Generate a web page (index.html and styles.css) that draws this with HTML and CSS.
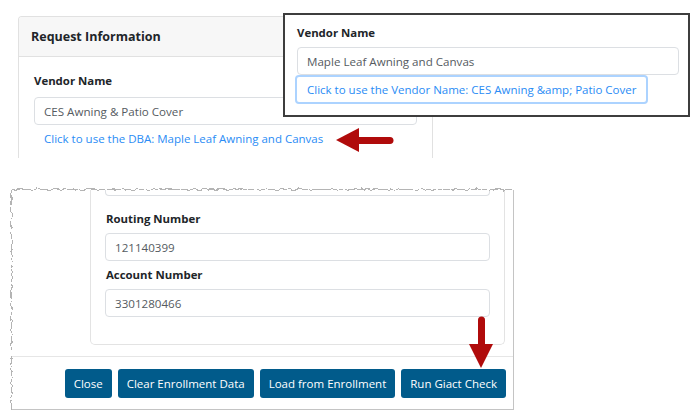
FILE: index.html
```html
<!DOCTYPE html>
<html lang="en">
<head>
    <meta charset="UTF-8">
    <meta name="viewport" content="width=device-width, initial-scale=1.0">
    <title>Vendor Name Request</title>
    <link rel="stylesheet" href="styles.css">
</head>
<body>

    <div class="shot">

        <!-- Request card (cropped at the bottom) -->
        <section class="card">
            <div class="card-header">Request Information</div>
            <div class="card-body">
                <label class="field-label" for="vendorName">Vendor Name</label>
                <input class="field" type="text" id="vendorName" value="CES Awning &amp; Patio Cover" readonly>
                <a class="use-link" href="#">Click to use the DBA: Maple Leaf Awning and Canvas</a>
            </div>
        </section>

        <!-- Callout: the DBA version of the same field -->
        <div class="callout">
            <label class="field-label" for="dbaName">Vendor Name</label>
            <input class="field" type="text" id="dbaName" value="Maple Leaf Awning and Canvas" readonly>
            <a class="use-btn" href="#">Click to use the Vendor Name: CES Awning &amp;amp; Patio Cover</a>
        </div>

        <svg class="arrow arrow-left" width="60" height="26" viewBox="0 0 60 26">
            <polygon points="1,13 24,1 24,25" />
            <path d="M22 10 H55 a3 3 0 0 1 0 7 H22 Z" />
        </svg>

        <!-- Modal clip with torn edges -->
        <div class="modal-clip">
            <svg class="torn" width="508" height="228" viewBox="0 0 508 228">
                <defs>
                    <filter id="rough" filterUnits="userSpaceOnUse" x="-10" y="-10" width="530" height="250">
                        <feTurbulence type="fractalNoise" baseFrequency="0.18" numOctaves="2" seed="7" />
                        <feDisplacementMap in="SourceGraphic" scale="5" xChannelSelector="R" yChannelSelector="G" />
                    </filter>
                </defs>
                <path d="M504 4.5 L3.5 4.5 L3.5 224" fill="none" stroke="#b4b4b4" stroke-width="1" filter="url(#rough)" />
            </svg>

            <div class="bank-card">
                <div class="field-stub"></div>
                <label class="field-label first" for="routing">Routing Number</label>
                <input class="field" type="text" id="routing" value="121140399" readonly>
                <label class="field-label" for="account">Account Number</label>
                <input class="field" type="text" id="account" value="3301280466" readonly>
            </div>

            <div class="modal-footer">
                <button class="btn">Close</button>
                <button class="btn">Clear Enrollment Data</button>
                <button class="btn">Load from Enrollment</button>
                <button class="btn">Run Giact Check</button>
            </div>
        </div>

        <svg class="arrow arrow-down" width="28" height="56" viewBox="0 0 28 56">
            <path d="M10 5 a3.5 3.5 0 0 1 7 0 V32 H10 Z" />
            <polygon points="1,29 25,29 13,53" />
        </svg>

    </div>

</body>
</html>
```

FILE: styles.css
```css
* {
    box-sizing: border-box;
}
body {
    margin: 0;
    background: #ffffff;
    font-family: "Open Sans", "Noto Sans", sans-serif;
    font-size: 11.5px;
    color: #212529;
}
.shot {
    position: relative;
    width: 692px;
    height: 416px;
    overflow: hidden;
}

/* shared form bits */
.field-label {
    display: block;
    font-weight: bold;
    font-size: 11.4px;
    line-height: 20px;
    color: #212529;
}
.field {
    display: block;
    width: 100%;
    height: 28px;
    padding: 0 9px;
    border: 1px solid #dcdfe3;
    border-radius: 4px;
    font-family: inherit;
    font-size: 11.6px;
    color: #555b61;
    background: #ffffff;
    outline: none;
}

/* request card */
.card {
    margin: 16px 0 0 18px;
    width: 415px;
    height: 142px;
    border: 1px solid #e1e1e1;
    border-bottom: none;
    border-radius: 4px 4px 0 0;
    overflow: hidden;
}
.card-header {
    height: 40px;
    padding: 0 12px;
    display: flex;
    align-items: center;
    background: #f7f7f7;
    border-bottom: 1px solid #e1e1e1;
    font-weight: bold;
    font-size: 12.5px;
}
.card-body {
    padding: 0 15px;
}
.card-body .field-label {
    margin: 14px 0 6px;
}
.use-link {
    display: block;
    margin-top: 4px;
    padding-left: 10px;
    line-height: 20px;
    color: #2a8cf5;
    text-decoration: none;
}

/* callout box */
.callout {
    position: absolute;
    left: 283px;
    top: 13px;
    width: 407px;
    height: 104px;
    padding: 8px 9px 0 12px;
    border: 2px solid #3d3d3d;
    background: #ffffff;
}
.callout .field-label {
    margin-bottom: 4px;
}
.callout .field {
    width: 382px;
}
.use-btn {
    display: inline-block;
    margin-left: -2px;
    height: 29px;
    padding: 0 10px;
    line-height: 25px;
    border: 2px solid #acd3ff;
    border-radius: 4px;
    color: #2a8cf5;
    text-decoration: none;
}

/* red arrows */
.arrow {
    position: absolute;
    fill: #b00b0b;
}
.arrow-left {
    left: 335px;
    top: 127px;
}
.arrow-down {
    left: 468px;
    top: 315px;
}

/* modal clip */
.modal-clip {
    position: relative;
    margin: 32px 0 0 12px;
    width: 502px;
    height: 220px;
    border-right: 1px solid #c4c4c4;
    border-bottom: 1px solid #c4c4c4;
}
.torn {
    position: absolute;
    left: -4px;
    top: -5px;
    overflow: visible;
}
.bank-card {
    margin-left: 78px;
    width: 415px;
    padding: 0 14px 27px;
    border: 1px solid #e3e3e3;
    border-top: none;
    border-radius: 0 0 5px 5px;
}
.field-stub {
    height: 6px;
    border: 1px solid #dcdfe3;
    border-top: none;
    border-radius: 0 0 4px 4px;
}
.bank-card .field-label {
    margin: 4px 0 4px 1px;
}
.bank-card .field-label.first {
    margin-top: 13px;
}
.modal-footer {
    margin-top: 11px;
    padding: 12px 7px 0 0;
    display: flex;
    justify-content: flex-end;
    gap: 6px;
    border-top: 1px solid #e6e6e6;
}
.btn {
    height: 29px;
    padding: 0 9px;
    border: none;
    border-radius: 3px;
    background: #015b8b;
    color: #ffffff;
    font-family: inherit;
    font-size: 11.5px;
    cursor: pointer;
}
```
